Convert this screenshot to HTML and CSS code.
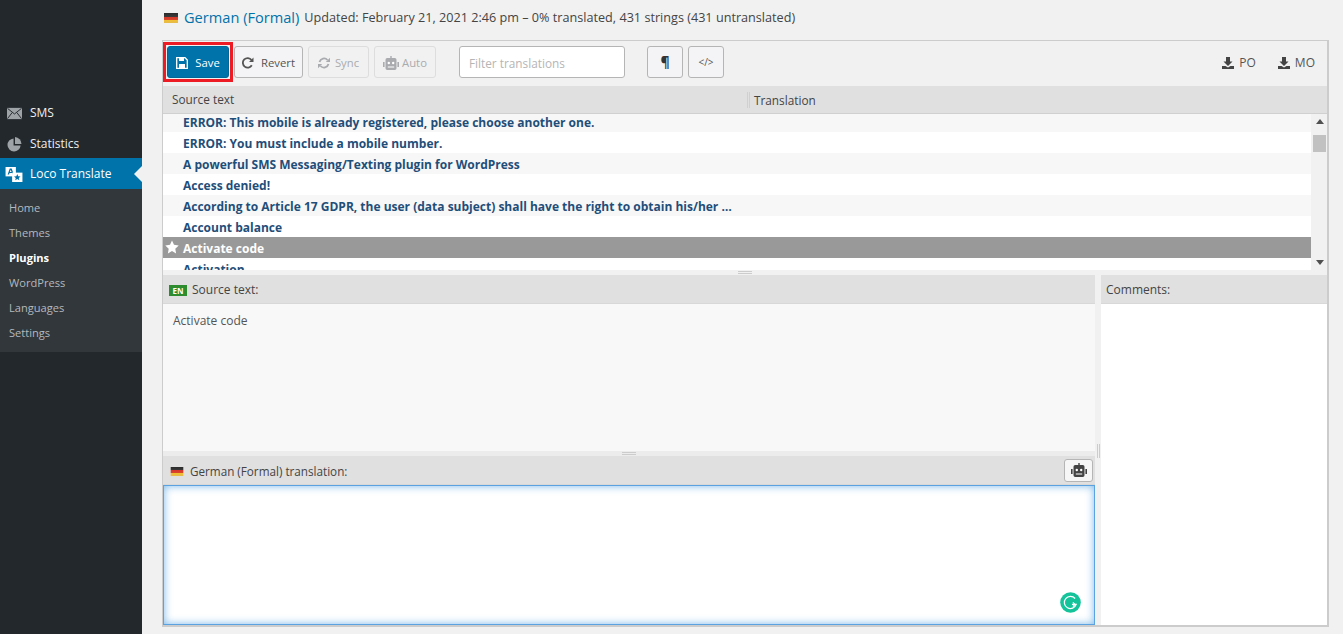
FILE: index.html
```html
<!DOCTYPE html>
<html lang="en">
<head>
<meta charset="utf-8">
<title>Loco Translate</title>
<link rel="stylesheet" href="styles.css">
</head>
<body>
<svg class="defs" width="0" height="0" aria-hidden="true">
  <defs>
    <linearGradient id="de" x1="0" y1="0" x2="0" y2="1">
      <stop offset="0" stop-color="#2b2b2b"/><stop offset=".36" stop-color="#3a3a3a"/>
      <stop offset=".37" stop-color="#d8352a"/><stop offset=".66" stop-color="#d8452a"/>
      <stop offset=".67" stop-color="#f2c230"/><stop offset="1" stop-color="#e6b84a"/>
    </linearGradient>
    <symbol id="robot" viewBox="0 0 16 14">
      <path fill="currentColor" d="M7.3 0h1.4v2h3.1A1.7 1.7 0 0 1 13.500 3.700V12.300A1.700 1.700 0 0 1 11.800 14H4.200A1.700 1.700 0 0 1 2.500 12.300V3.700A1.700 1.700 0 0 1 4.200 2h3.100zM0 6h1.600v5H0zM14.400 6H16v5h-1.600z"/>
      <circle cx="5.800" cy="7" r="1.200" fill="#fff"/><circle cx="10.200" cy="7" r="1.200" fill="#fff"/>
      <path fill="#fff" d="M4.800 10.500h6.400v1H4.800z"/>
    </symbol>
    <symbol id="download" viewBox="0 0 12 12">
      <path fill="currentColor" d="M4 0h4v4.500h2.500L6 9 1.500 4.500H4zM0 9h3.500L6 10.500 8.500 9H12v3H0z"/>
    </symbol>
  </defs>
</svg>
<div class="shell">
  <nav class="sidebar">
    <ul class="menu">
      <li class="menu-item">
        <svg class="menu-icon" viewBox="0 0 16 12"><path fill="#9ea3a8" d="M0 0h16v12H0z"/><path fill="none" stroke="#23282d" d="M.5 .5 8 6.500 15.500 .5M.5 11.500 5.500 5M15.500 11.500 10.500 5"/></svg>
        <span>SMS</span>
      </li>
      <li class="menu-item stats">
        <svg class="menu-icon" viewBox="0 0 16 16"><path fill="#9ea3a8" d="M7 1.500v7.500h7.500A7 7 0 1 1 7 1.500z"/><path fill="#9ea3a8" d="M8.500 0A7.500 7.500 0 0 1 15.500 7.500H8.500z"/></svg>
        <span>Statistics</span>
      </li>
      <li class="menu-item current">
        <svg class="menu-icon loco" viewBox="0 0 18 16"><path fill="#fff" d="M0 0h11v10H0z"/><path fill="#0073aa" d="M4.500 1.500h2l2.300 6.500H7.300l-.5-1.500H4.200L3.700 8H2.200zM4.600 5.300h1.800L5.500 2.800z"/><path fill="#fff" d="M7 6h11v10H7z"/><path fill="#0073aa" d="m12.500 7.500 1 2.300 2.500.2-1.900 1.600.6 2.400-2.200-1.300-2.200 1.300.6-2.400L9 10l2.500-.2z"/></svg>
        <span>Loco Translate</span>
      </li>
    </ul>
    <ul class="submenu">
      <li>Home</li>
      <li>Themes</li>
      <li class="active">Plugins</li>
      <li>WordPress</li>
      <li>Languages</li>
      <li>Settings</li>
    </ul>
  </nav>
  <main class="content">
    <header class="title-row">
      <svg class="flag" viewBox="0 0 14 10"><rect width="14" height="10" fill="url(#de)"/></svg>
      <a class="title">German (Formal)</a>
      <span class="meta">Updated: February 21, 2021 2:46 pm – 0% translated, 431 strings (431 untranslated)</span>
    </header>
    <section class="editor">
      <div class="toolbar">
        <button class="btn primary save">
          <svg class="ic" viewBox="0 0 12 12"><path fill="none" stroke="currentColor" stroke-width="1.300" d="M.7.7h8.300l2.300 2.300v8.300H.7z"/><path fill="currentColor" d="M3 0h5v4H3zM3 7h6v5H3z"/></svg>
          Save
        </button>
        <button class="btn">
          <svg class="ic" viewBox="0 0 12 12"><path fill="none" stroke="currentColor" stroke-width="1.800" d="M9.800 8.300A4.800 4.800 0 1 1 9.500 3"/><path fill="currentColor" d="M11.500 .5v4.500H7z"/></svg>
          Revert
        </button>
        <button class="btn off">
          <svg class="ic" viewBox="0 0 12 12"><path fill="none" stroke="currentColor" stroke-width="1.800" d="M1.500 5A4.700 4.700 0 0 1 9.500 3M10.500 7A4.700 4.700 0 0 1 2.500 9"/><path fill="currentColor" d="M12 .8V5H7.800zM0 11.200V7h4.200z"/></svg>
          Sync
        </button>
        <button class="btn off">
          <svg class="ic robot"><use href="#robot"/></svg>
          Auto
        </button>
        <input class="filter" type="text" placeholder="Filter translations">
        <button class="btn square para">¶</button>
        <button class="btn square code">&lt;/&gt;</button>
        <div class="downloads">
          <a><svg class="ic"><use href="#download"/></svg>PO</a>
          <a><svg class="ic"><use href="#download"/></svg>MO</a>
        </div>
      </div>
      <div class="grid-head">
        <div class="col">Source text</div>
        <div class="col second">Translation</div>
      </div>
      <div class="list-wrap">
        <ul class="rows">
          <li>ERROR: This mobile is already registered, please choose another one.</li>
          <li>ERROR: You must include a mobile number.</li>
          <li>A powerful SMS Messaging/Texting plugin for WordPress</li>
          <li>Access denied!</li>
          <li>According to Article 17 GDPR, the user (data subject) shall have the right to obtain his/her …</li>
          <li>Account balance</li>
          <li class="selected">
            <svg class="star" viewBox="0 0 14 14"><path fill="#fff" d="m7 .5 2 4.300 4.700.6-3.400 3.300.8 4.700L7 11.100l-4.100 2.300.8-4.700L.3 5.400 5 4.800z"/></svg>
            Activate code
          </li>
          <li>Activation</li>
        </ul>
        <div class="scrollbar">
          <span class="arrow up"></span>
          <span class="thumb"></span>
          <span class="arrow down"></span>
        </div>
      </div>
      <div class="splitter"><span class="grip"></span></div>
      <div class="panes">
        <div class="pane-main">
          <div class="pane-head first"><span class="lang">EN</span>Source text:</div>
          <div class="source-body">Activate code</div>
          <div class="splitter low"><span class="grip"></span></div>
          <div class="pane-head trans-head">
            <svg class="flag small" viewBox="0 0 14 10"><rect width="14" height="10" fill="url(#de)"/></svg>
            <span class="trans-label">German (Formal) translation:</span>
            <button class="btn mini"><svg class="ic robot dark"><use href="#robot"/></svg></button>
          </div>
          <div class="target">
            <span class="grammarly">
              <svg viewBox="0 0 22 22"><circle cx="11" cy="11" r="10.800" fill="#15c39a"/><path fill="none" stroke="#fff" stroke-width="1.300" d="M15.800 6.800A6.400 6.400 0 1 0 17 13H12.500"/><path fill="none" stroke="#fff" stroke-width="1.200" d="M13.500 10.800 15.800 13 13.500 15.200"/></svg>
            </span>
          </div>
        </div>
        <div class="v-split"><span class="v-grip"></span></div>
        <div class="pane-side">
          <div class="pane-head first">Comments:</div>
          <div class="side-body"></div>
        </div>
      </div>
    </section>
  </main>
</div>
</body>
</html>
```
FILE: styles.css
```css
* { box-sizing: border-box; }
html, body { margin: 0; padding: 0; height: 100%; overflow: hidden; }
body { background: #f1f1f1; color: #444; font: 12px/1.4 "Open Sans", "Noto Sans", sans-serif; }
ul { list-style: none; margin: 0; padding: 0; }
.defs { position: absolute; }
.shell { display: flex; height: 634px; }

.sidebar { width: 142px; flex: none; background: #23282d; padding-top: 97px; color: #eee; }
.menu-item { display: flex; align-items: center; height: 30px; padding: 1px 0 0 7px; gap: 8px; font-size: 12px; position: relative; }
.menu-item:first-child { height: 31px; }
.menu-item.stats { padding-top: 2px; }
.menu-icon { width: 15px; height: 15px; flex: none; }
.menu-item.current { height: 31px; background: #0073aa; color: #fff; }
.menu-icon.loco { width: 18px; margin-left: -2px; margin-right: -1px; }
.menu-item.current::after { content: ""; position: absolute; right: 0; top: 50%; margin-top: -8px; border: 8px solid transparent; border-left-width: 0; border-right-color: #f1f1f1; }
.submenu { background: #32373c; padding: 6px 0 7px; color: #b4b9be; font-size: 11.100px; }
.submenu li { height: 25px; line-height: 25px; padding-left: 9px; }
.submenu .active { color: #fff; font-weight: 700; }

.content { flex: 1; min-width: 0; padding: 7px 14px 0 20px; }
.title-row { display: flex; align-items: center; height: 21px; margin-bottom: 12px; padding-left: 2px; }
.flag { width: 14px; height: 10px; flex: none; }
.title { color: #0073aa; font-size: 14.600px; margin: 0 5px 0 6px; }
.meta { font-size: 12.650px; color: #444; }

.editor { height: 587px; border: 1px solid #ccc; border-bottom-width: 2px; border-right-width: 2px; display: flex; flex-direction: column; }
.toolbar { height: 45px; flex: none; display: flex; align-items: flex-start; padding: 5px 12px 0 4px; gap: 5px; }
.btn { height: 32px; padding: 1px 8px 0; display: inline-flex; align-items: center; justify-content: center; gap: 7px; border: 1px solid #b5b5b5; border-radius: 3px; background: #f4f4f6; color: #555; font: inherit; font-size: 11.300px; }
.btn.primary { width: 62px; background: #0073aa; border-color: #006799; color: #fff; position: relative; }
.save::after { content: ""; position: absolute; inset: -5px; border: 3px solid #ed1c24; }
.btn:nth-child(2) { width: 69px; }
.btn.off { width: 61px; border-color: #ddd; color: #a9abae; background: #f1f1f1; gap: 5px; }
.btn.off:nth-child(4) { width: 62px; gap: 3px; }
.ic { width: 12px; height: 12px; flex: none; }
.ic.robot { width: 16px; height: 14px; }
.filter { width: 166px; height: 32px; margin: 0 17px 0 18px; padding: 2px 9px 0; border: 1px solid #b5b5b5; border-radius: 3px; background: #fff; font: inherit; font-size: 11.800px; }
.filter::placeholder { color: #b5b5b5; }
.square { width: 36px; padding: 0; }
.para { font-weight: 700; font-size: 14px; color: #333; }
.code { font-size: 10px; }
.downloads { margin-left: auto; display: flex; gap: 22px; margin-top: 9px; color: #555; font-size: 12px; }
.downloads a { display: inline-flex; align-items: center; gap: 5px; }
.downloads .ic { color: #444; }

.grid-head { height: 28px; flex: none; display: flex; align-items: center; background: #e0e0e0; border-bottom: 1px solid #d0d0d0; font-size: 11.800px; }
.col { width: 584px; padding-left: 9px; flex: none; }
.col.second { padding-left: 4px; border-left: 3px double #d0d0d0; height: 16px; line-height: 16px; }

.list-wrap { height: 156px; flex: none; display: flex; overflow: hidden; background: #fff; }
.rows { flex: 1; min-width: 0; margin-top: -3px; }
.rows li { height: 21px; line-height: 23px; padding-left: 20px; color: #1f4e79; font-weight: 700; position: relative; }
.rows li:nth-child(odd) { background: #f7f7f7; }
.rows li.selected { background: #999; color: #fff; font-weight: 700; }
.star { position: absolute; left: 2px; top: 3px; width: 14px; height: 14px; }
.scrollbar { width: 16px; flex: none; background: #f1f1f1; display: flex; flex-direction: column; align-items: flex-start; position: relative; }
.arrow { position: absolute; left: 5px; border: 4px solid transparent; border-top-width: 0; border-bottom-width: 5px; }
.arrow.up { top: 5px; border-bottom-color: #505050; }
.arrow.down { bottom: 5px; border-bottom-width: 0; border-top-width: 5px; border-top-color: #505050; }
.thumb { width: 13px; height: 17px; margin: 21px 0 0 2px; background: #c1c1c1; }

.splitter { height: 5px; flex: none; display: flex; justify-content: center; align-items: flex-start; background: #f1f1f1; }
.grip { width: 14px; height: 3px; margin-top: 1px; border-top: 1px solid #ccc; border-bottom: 1px solid #ccc; }
.panes { flex: 1; min-height: 0; display: flex; }
.pane-main { width: 932px; display: flex; flex-direction: column; }
.pane-head { height: 29px; flex: none; display: flex; align-items: center; padding: 2px 0 0 6px; background: #e0e0e0; border-bottom: 1px solid #d8d8d8; }
.pane-head.first { padding-top: 3px; }
.lang { background: #2e8b2e; color: #fff; font-size: 8px; font-weight: 700; line-height: 11px; height: 11px; width: 18px; text-align: center; margin: -1px 5px 0 0; }
.source-body { height: 147px; flex: none; padding: 9px 10px; background: #f8f8f8; color: #555; }
.splitter.low { height: 5px; background: #ececec; }
.trans-head { position: relative; padding-left: 7px; gap: 6px; }
.trans-label { font-size: 11.700px; }
.flag.small { width: 14px; height: 9px; }
.btn.mini { margin: -2px 2px 0 auto; width: 29px; height: 23px; padding: 0; color: #444; background: #f6f6f6; }
.target { flex: 1; border: 1px solid #5ba3e0; background: #fff; box-shadow: inset 0 0 9px rgba(40, 140, 220, .6); position: relative; }
.grammarly { position: absolute; right: 13px; bottom: 11px; width: 21px; height: 21px; }
.grammarly svg { display: block; }
.v-split { width: 6px; flex: none; display: flex; justify-content: center; align-items: flex-start; background: #f1f1f1; }
.v-grip { width: 3px; height: 14px; margin-top: 169px; border-left: 1px solid #ccc; border-right: 1px solid #ccc; }
.pane-side { flex: 1; min-width: 0; display: flex; flex-direction: column; }
.pane-side .pane-head { padding-left: 5px; }
.side-body { flex: 1; background: #fff; }
```
